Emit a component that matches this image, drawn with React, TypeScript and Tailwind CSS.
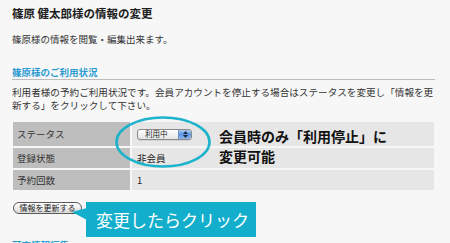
import React from 'react';

const jp = "font-['Hiragino_Kaku_Gothic_Pro','Noto_Sans_CJK_JP',sans-serif]";

function FakeSelect() {
  return (
    <div className="flex h-[11px] w-[55px] items-center overflow-hidden rounded-[3px] border border-[#8a8a8a] bg-gradient-to-b from-white to-[#e4e4e4] shadow-[0_1px_0_rgba(0,0,0,0.08)]">
      <span className="flex-1 pl-[7px] text-[7.5px] leading-none text-[#222]">利用中</span>
      <span className="flex h-full w-[13px] flex-col items-center justify-center gap-[1px] rounded-r-[2px] border-l border-[#6b8fc4] bg-gradient-to-b from-[#a9c9f0] via-[#5f97e2] to-[#8fbaf0]">
        <svg width="5" height="3" viewBox="0 0 5 3">
          <path d="M0 3 L2.5 0 L5 3 Z" fill="#1d2a44" />
        </svg>
        <svg width="5" height="3" viewBox="0 0 5 3">
          <path d="M0 0 L2.5 3 L5 0 Z" fill="#1d2a44" />
        </svg>
      </span>
    </div>
  );
}

export default function App() {
  const rows = [
    { label: 'ステータス', value: <FakeSelect />, h: 'h-[24px]' },
    { label: '登録状態', value: '非会員', h: 'h-[20px]' },
    { label: '予約回数', value: '1', h: 'h-[20px]' },
  ];

  return (
    <div className={`relative h-[243px] w-[450px] overflow-hidden bg-[#f7f7f7] ${jp}`}>
      <div className="pl-3 pr-[15px] pt-[5px]">
        {/* 見出し */}
        <h1 className="text-[11.5px] font-bold leading-[16px] text-[#1e1e1e]">
          篠原 健太郎様の情報の変更
        </h1>
        <p className="mt-[11px] text-[9.5px] leading-[14px] text-[#333]">
          篠原様の情報を閲覧・編集出来ます。
        </p>

        {/* ご利用状況 */}
        <h2 className="mt-[19px] border-b border-[#bdbdbd] text-[9.5px] font-bold leading-[14px] text-[#2b9bd1]">
          篠原様のご利用状況
        </h2>
        <p className="mt-[6px] text-[9.6px] leading-[13px] text-[#333]">
          <span className="block whitespace-nowrap">
            利用者様の予約ご利用状況です。会員アカウントを停止する場合はステータスを変更し「情報を更
          </span>
          <span className="block whitespace-nowrap">新する」をクリックして下さい。</span>
        </p>

        <div className="mx-[1px] mt-[10px] grid grid-cols-[117px_1fr] gap-[2px] bg-[#f7f7f7]">
          {rows.map((r) => (
            <React.Fragment key={r.label}>
              <div className={`flex items-center bg-[#bebebe] pl-[4px] text-[9.5px] text-[#333] ${r.h}`}>
                {r.label}
              </div>
              <div className={`flex items-center bg-[#e6e6e6] pl-[5px] text-[9.5px] text-[#222] ${r.h}`}>
                {r.value}
              </div>
            </React.Fragment>
          ))}
        </div>

        {/* 更新ボタン */}
        <div className="mt-[12px] flex items-start gap-[4px] pl-[1px]">
          <button className="h-[12px] w-[69px] rounded-full border border-[#5a5a5a] bg-gradient-to-b from-white to-[#d9d9d9] text-[8px] leading-none text-[#222]">
            情報を更新する
          </button>
          <div className="relative flex h-[35px] w-[170px] items-center bg-[#13aecb] pl-[10px] text-[17px] leading-none text-white">
            変更したらクリック
            <svg className="absolute left-[-14px] top-[4px]" width="15" height="16" viewBox="0 0 15 16">
              <path d="M15 2 L0 6 L15 14 Z" fill="#13aecb" />
            </svg>
          </div>
        </div>

        <h2 className="mt-[1px] text-[9.5px] font-bold leading-[14px] text-[#2b9bd1]">顧客情報編集</h2>
      </div>

      {/* 注釈 */}
      <svg className="absolute left-[114px] top-[115px]" width="100" height="55" viewBox="0 0 100 55">
        <ellipse cx="49" cy="27" rx="46.5" ry="24.5" fill="none" stroke="#1eb3cc" strokeWidth="2.6" />
      </svg>
      <div className="absolute left-[219px] top-[126px] text-[14px] font-bold leading-[20px] text-[#111]">
        <div className="whitespace-nowrap">会員時のみ「利用停止」に</div>
        <div>変更可能</div>
      </div>
    </div>
  );
}
